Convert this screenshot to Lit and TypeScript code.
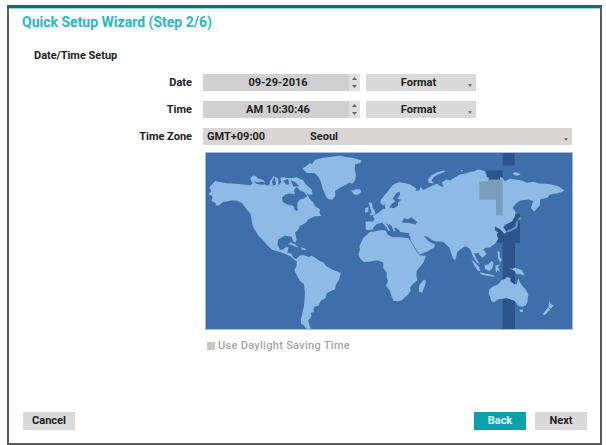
import { css, html, svg, LitElement } from "lit";
import { customElement, property } from "lit/decorators.js";
import { classMap } from "lit/directives/class-map.js";

const LAND = [
  // North America
  "M10 103L27 85 47 88 60 91 92 93 132 97 140 92 132 77 142 68 150 70 157 78 167 80 178 86 192 85 202 70 216 76 232 73 250 76 272 73 292 83 300 96 317 110 320 125 307 125 300 118 310 136 322 150 326 160 342 170 340 180 346 190 327 191 307 200 300 210 282 220 276 232 267 240 272 262 268 270 262 267 257 253 237 250 217 260 214 276 222 292 232 291 238 284 248 284 244 301 256 303 262 316 276 321 270 326 252 311 227 300 197 291 182 276 170 262 157 250 140 220 134 185 122 170 107 150 92 143 77 143 60 146 52 147 40 157 32 160 28 150 17 145 20 130 7 125 16 115Z",
  // Greenland and Iceland
  "M289 47L300 40 312 30 318 33 327 20 352 14 402 8 420 12 442 15 467 23 463 30 447 35 446 50 450 65 448 80 440 93 430 90 417 97 402 105 387 115 388 128 380 140 370 140 362 135 350 108 344 85 336 70 325 60 302 60Z",
  "M434 110L442 114 448 109 462 109 466 117 456 126 444 125Z",
  // Caribbean
  "M246 275L254 270 268 276 278 285 268 283 256 276ZM284 284L298 288 302 293 288 292Z",
  // South America
  "M272 318L280 310 292 308 307 314 317 310 327 316 342 326 354 331 360 341 380 352 404 361 402 372 400 381 390 396 387 411 374 416 362 424 358 438 345 446 337 461 327 462 322 471 324 480 314 482 317 491 307 506 310 520 316 530 302 531 292 518 285 516 285 501 294 461 297 421 294 396 282 386 274 372 265 354 272 340Z",
  // Europe and Asia
  "M479 230L479 207 502 207 506 198 500 190 517 180 532 168 538 168 536 158 540 153 530 158 523 150 525 140 542 120 557 100 568 92 582 88 598 91 612 95 632 108 628 114 640 113 644 102 652 112 672 102 692 93 702 99 712 103 708 88 722 80 732 83 746 74 762 65 778 62 792 57 804 55 817 50 837 55 840 65 860 70 887 73 897 85 912 78 927 80 947 83 962 90 982 87 1000 92 1022 93 1040 96 1057 100 1075 113 1068 118 1050 122 1032 125 1024 135 1002 140 1002 157 984 177 975 165 982 145 967 140 942 143 930 152 920 165 929 178 926 192 918 207 897 217 892 224 902 238 896 244 882 230 867 222 866 232 876 240 872 248 877 258 869 272 850 286 838 286 832 291 842 305 830 316 822 309 817 301 804 303 812 320 822 337 812 330 800 311 796 298 790 287 777 281 768 287 754 298 750 315 747 324 740 316 737 306 730 285 722 278 712 268 687 266 678 264 667 254 662 254 672 268 687 276 685 284 667 296 642 306 636 300 627 286 614 263 612 250 598 244 582 242 580 232 570 229 564 240 557 230 545 215 539 212 548 224 556 232 548 240 542 228 530 215 517 216 504 222 502 230 487 233Z",
  // Africa
  "M492 238L505 237 532 231 542 235 545 245 560 252 582 253 608 257 616 270 632 298 642 309 660 310 652 331 640 346 632 356 631 370 634 384 620 396 612 406 614 416 607 426 587 444 576 447 562 446 556 430 552 416 540 400 546 386 542 374 542 361 532 348 532 331 520 325 507 324 490 328 472 328 462 317 457 306 462 292 460 281 472 256 484 246Z",
  "M654 382L660 386 656 402 648 422 638 418 640 398Z",
  // British Isles
  "M488 150L498 150 500 165 508 178 506 186 490 188 497 178 492 166ZM478 166L487 164 487 177 477 180Z",
  // Arctic islands
  "M667 90L667 78 678 66 694 58 714 53 718 56 700 63 684 72 676 84 684 92ZM920 62L928 57 944 63 938 68 928 68ZM762 50L770 52 768 57Z",
  // Indonesia and New Guinea
  "M796 322L804 328 818 342 824 356 816 355 806 342ZM822 360L840 364 862 368 868 373 844 371 824 366ZM835 338L848 336 856 326 863 332 858 350 850 356 838 351ZM868 340L882 336 876 344 882 358 874 354 870 362ZM874 296L882 300 880 312 888 322 882 330 876 316Z",
  "M906 346L918 349 928 346 948 354 956 370 944 366 932 366 926 356Z",
  // Australia, Tasmania and New Zealand
  "M850 411L862 402 877 396 886 384 897 380 902 374 914 377 912 386 925 396 932 396 937 378 943 392 950 402 958 410 967 426 964 451 958 461 947 464 936 460 927 447 915 442 902 438 877 441 866 449 857 449 853 436 848 424ZM940 472L952 472 950 480 943 480Z",
  "M1030 446L1036 457 1044 459 1034 471 1027 466ZM1026 466L1032 473 1017 489 1009 487Z",
];

const WATER = [
  // Hudson Bay
  "M228 135L238 125 252 122 267 125 264 112 272 102 280 112 294 118 304 130 292 138 281 140 274 152 275 175 266 172 262 160 242 155 230 148Z",
  // Arctic channels
  "M145 83L154 88 170 86 182 94 168 96 150 93ZM170 74L180 76 192 86 190 97 180 98ZM198 85L206 72 210 96 200 98ZM216 70L224 78 226 88 218 98ZM232 84L246 78 250 94 240 96ZM254 82L268 88 280 100 262 102Z",
  // Baltic and Black Sea
  "M550 164L558 152 568 146 560 138 572 120 581 117 582 126 574 138 586 141 576 149 576 160 562 167Z",
  "M588 210L594 196 606 200 616 194 634 208 628 216 610 211Z",
  // Mediterranean
  "M502 226L512 214 530 210 544 224 550 214 562 226 572 226 582 238 610 242 608 255 582 254 560 254 544 246 540 234 520 232Z",
  // Persian Gulf
  "M653 250L662 252 678 263 690 268 680 273 666 265Z",
];

@customElement("world-map")
export class WorldMap extends LitElement {
  static styles = css`
    :host {
      display: block;
      box-sizing: border-box;
      height: 178px;
      border: 1px solid #a9bddb;
      background-color: #3f6fab;
    }

    svg {
      display: block;
      width: 100%;
      height: 100%;
    }

    .land {
      fill: #8ebae6;
    }

    .water {
      fill: #3f6fab;
    }

    .italy {
      fill: none;
      stroke: #8ebae6;
      stroke-width: 5;
    }

    .zone {
      fill: #2a548b;
    }

    .zone-land {
      fill: #799eb9;
    }

    .japan {
      fill: none;
      stroke: #6a92bd;
      stroke-width: 6;
    }
  `;

  render() {
    return html`
      <svg viewBox="0 0 1098 531" preserveAspectRatio="none">
        <path class="zone" d="M890 0h36v38h-36zM867 185h75v86h-15v260h-37V271h-23z" />
        ${LAND.map((d) => svg`<path class="land" d=${d} />`)}
        ${WATER.map((d) => svg`<path class="water" d=${d} />`)}
        <path class="italy" d="M532 210l12 14 6 10M560 222l6 14" />
        <path class="zone" d="M842 53h48v20h-8v9h-34v-9h-6z" />
        <path class="zone-land" d="M820 85h26v-5h44v108h-20v-48h-50z" />
        <path class="japan" d="M944 196l-8 6M934 206l-4 18 -14 8 -12 5" />
      </svg>
    `;
  }
}

@customElement("wizard-button")
export class WizardButton extends LitElement {
  @property({ type: Boolean }) primary = false;

  static styles = css`
    :host {
      display: block;
    }

    .button {
      display: block;
      width: 52px;
      height: 18px;
      padding: 0;
      border: none;
      background-color: #d9d9d9;
      color: #222;
      font: 700 11px/18px Roboto, sans-serif;
    }

    .primary {
      background-color: #0ba1aa;
      color: #e4ffff;
    }
  `;

  render() {
    return html`
      <button class=${classMap({ button: true, primary: this.primary })}>
        <slot></slot>
      </button>
    `;
  }
}

@customElement("app-root")
export class AppRoot extends LitElement {
  static styles = css`
    :host {
      display: block;
      box-sizing: border-box;
      height: 445px;
      padding: 5px 4px 0 7px;
      background-color: #fff;
      color: #222;
      font: 500 11px/17px Roboto, sans-serif;
    }

    .window {
      display: flex;
      flex-direction: column;
      box-sizing: border-box;
      height: 440px;
      padding: 6px 13px 13px 14px;
      border: 2px solid #5c5c5e;
      border-top: 3px solid #2b6068;
      box-shadow: inset 0 1px #8fdce0;
    }

    .title {
      margin: 0 0 0 -1px;
      color: #25b9c3;
      font-size: 14px;
      font-weight: 700;
      line-height: 17px;
      letter-spacing: 0;
      white-space: nowrap;
    }

    .subtitle {
      margin: 16px 0 0 11px;
      font-size: 11px;
      font-weight: 700;
      line-height: 17px;
      letter-spacing: -0.02px;
    }

    .form {
      display: grid;
      grid-template-columns: 169px 369px;
      column-gap: 11px;
      row-gap: 10px;
      margin-top: 10px;
    }

    .label {
      text-align: right;
      font-weight: 700;
    }

    .controls {
      display: flex;
      gap: 6px;
      height: 17px;
      font-weight: 700;
    }

    .value {
      display: flex;
      width: 157px;
      background-color: #d0d0d0;
    }

    .text {
      flex: 1;
      padding-left: 4px;
      text-align: center;
    }

    .select .text {
      padding-left: 3px;
    }

    .spinner {
      display: flex;
      flex-direction: column;
      align-items: center;
      justify-content: space-between;
      box-sizing: border-box;
      width: 11px;
      padding: 3px 0;
      background-color: #e0e0e0;
    }

    .arrow {
      display: block;
      width: 5px;
      height: 3px;
      fill: #666;
    }

    .select {
      display: flex;
      align-items: flex-end;
      box-sizing: border-box;
      width: 110px;
      padding: 0 4px 0 0;
      background-color: #d9d9d9;
    }

    .select .arrow {
      width: 4px;
      margin-bottom: 4px;
    }

    .zone {
      width: 369px;
      padding-left: 4px;
      background-color: #d9d6d5;
    }

    .offset {
      width: 103px;
    }

    .city {
      flex: 1;
    }

    .map {
      margin: 7px 0 0 182px;
      width: 368px;
    }

    .dst {
      display: flex;
      align-items: center;
      gap: 3px;
      margin: 7px 0 0 184px;
      color: #a6a6a6;
      letter-spacing: 0.3px;
    }

    .checkbox {
      width: 8px;
      height: 8px;
      background-color: #c6c6c6;
    }

    .footer {
      display: flex;
      gap: 9px;
      margin-top: auto;
    }

    .cancel {
      margin-right: auto;
    }
  `;

  arrow(up = false) {
    return html`
      <svg class="arrow" viewBox="0 0 5 3">
        <path d=${up ? "M0 3L2.5 0 5 3Z" : "M0 0L2.5 3 5 0Z"} />
      </svg>
    `;
  }

  row(label: string, value: string) {
    return html`
      <div class="label">${label}</div>
      <div class="controls">
        <div class="value">
          <span class="text">${value}</span>
          <span class="spinner">${this.arrow(true)}${this.arrow()}</span>
        </div>
        <div class="select">
          <span class="text">Format</span>
          ${this.arrow()}
        </div>
      </div>
    `;
  }

  render() {
    return html`
      <div class="window">
        <h1 class="title">Quick Setup Wizard (Step 2/6)</h1>
        <h2 class="subtitle">Date/Time Setup</h2>
        <div class="form">
          ${this.row("Date", "09-29-2016")} ${this.row("Time", "AM 10:30:46")}
          <div class="label">Time Zone</div>
          <div class="controls">
            <div class="select zone">
              <span class="offset">GMT+09:00</span>
              <span class="city">Seoul</span>
              ${this.arrow()}
            </div>
          </div>
        </div>
        <world-map class="map"></world-map>
        <div class="dst">
          <span class="checkbox"></span>
          <span>Use Daylight Saving Time</span>
        </div>
        <div class="footer">
          <wizard-button class="cancel">Cancel</wizard-button>
          <wizard-button primary>Back</wizard-button>
          <wizard-button>Next</wizard-button>
        </div>
      </div>
    `;
  }
}
